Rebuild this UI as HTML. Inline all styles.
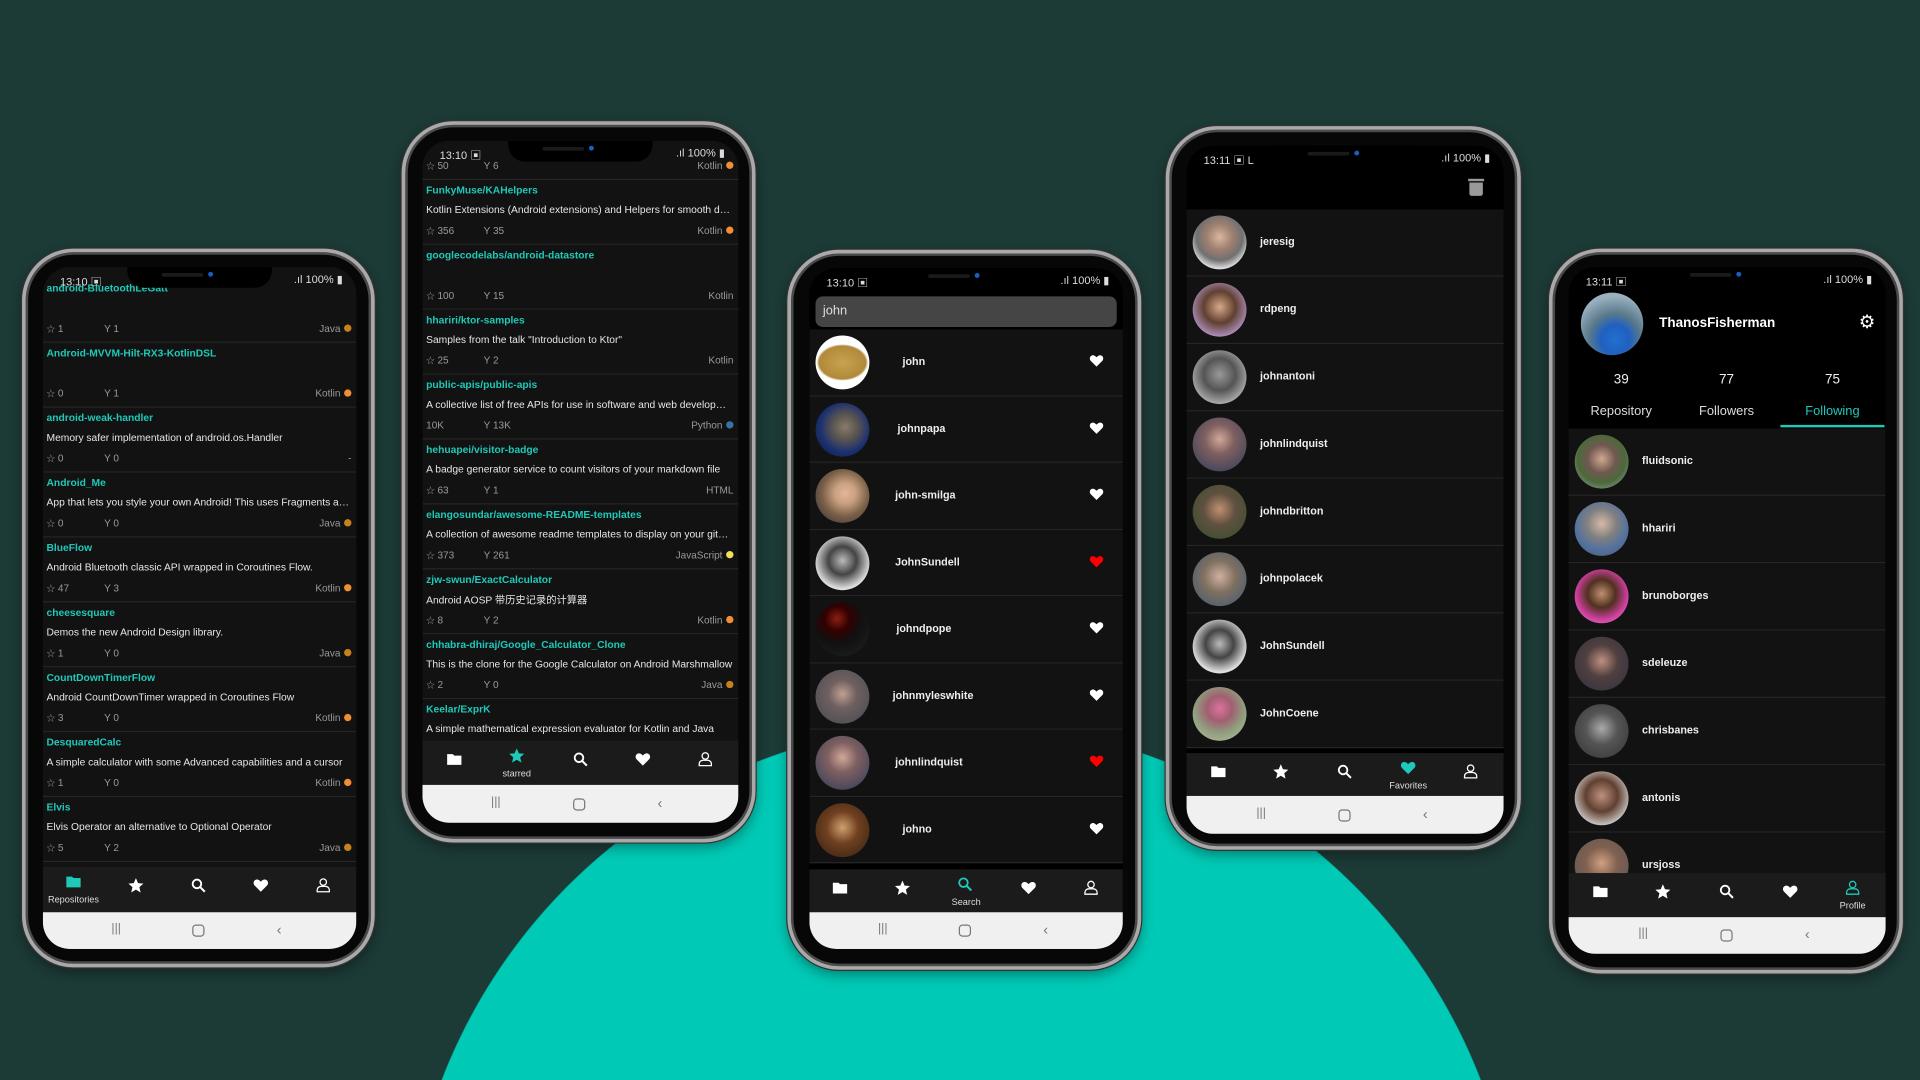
<!DOCTYPE html>
<html><head><meta charset="utf-8"><style>
*{margin:0;padding:0;box-sizing:border-box}
html,body{width:1920px;height:1080px;overflow:hidden;background:#1c3a36}
#w{position:absolute;left:0;top:0;width:1568px;height:882px;transform:scale(1.22449);transform-origin:0 0;font-family:"Liberation Sans","Noto Sans CJK SC",sans-serif;overflow:hidden;background:radial-gradient(circle 455px at 785px 1045px,#00c9b5 99.8%,#1c3a36 100%)}
.phone{position:absolute;border-radius:42px;background:#070707;border:3px solid #a9a9a9;box-shadow:inset 0 0 0 2px #4a4a4a,0 0 0 1px #333,0 4px 10px rgba(0,0,0,.35)}
.scr{position:absolute;border-radius:22px;overflow:hidden;background:#121212}
.notch{position:absolute;left:50%;top:0;width:118px;margin-left:-59px;height:17px;background:#000;border-radius:0 0 14px 14px;z-index:5}
.notch:after{content:"";position:absolute;left:66px;top:4px;width:4px;height:4px;border-radius:50%;background:#1560c0}
.notch:before{content:"";position:absolute;left:28px;top:5px;width:34px;height:3px;border-radius:2px;background:#1a1a1a}
.sb{position:absolute;left:0;right:0;top:0;height:18px;z-index:6;color:#ddd;font-size:9px}
.sb .t{position:absolute;left:14px;top:5px}
.sb .r{position:absolute;right:11px;top:5px}
.list{position:absolute;left:0;right:0}
.it{height:53px;border-bottom:1px solid #262626;position:relative;background:#121212}
.it .ti{position:absolute;left:3px;top:3px;color:#1fc9b9;font-weight:bold;font-size:8.4px;white-space:nowrap}
.it .de{position:absolute;left:3px;right:4px;top:19px;color:#e6e6e6;font-size:8.4px;white-space:nowrap;overflow:hidden;text-overflow:ellipsis}
.it .st{position:absolute;left:3px;top:37px;color:#9a9a9a;font-size:8.2px}
.it .st b{font-weight:normal;font-size:7px}
.it .fk{position:absolute;left:50px;top:37px;color:#9a9a9a;font-size:8.2px}
.it .ln{position:absolute;right:4px;top:37px;color:#9a9a9a;font-size:8.2px}
.dot{display:inline-block;width:6px;height:6px;border-radius:50%;margin-left:3px;vertical-align:0}
.nav{position:absolute;left:0;right:0;height:36px;background:#1b1b1b}
.nav .i{position:absolute;top:8px;width:14px;height:14px;margin-left:-7px}
.nav .sel{top:5px}
.nav .lb{position:absolute;top:22px;font-size:7.5px;color:#ddd;transform:translateX(-50%);white-space:nowrap}
.an{position:absolute;left:0;right:0;bottom:0;background:#f0f0f0}
.an span{position:absolute;top:50%;color:#777}
.u{height:54.5px;border-bottom:1px solid #262626;position:relative;background:#121212}
.av{position:absolute;width:44px;height:44px;border-radius:50%;top:5px}
.nm{position:absolute;top:21px;color:#eee;font-weight:bold;font-size:8.8px}
.ht{position:absolute;top:19px;width:13px;height:13px}
</style></head><body><div id="w">
<svg width="0" height="0" style="position:absolute">
<defs>
<symbol id="fold" viewBox="0 0 24 24"><path d="M2 5h8l2 2h10v13H2z" fill="currentColor"/></symbol>
<symbol id="star" viewBox="0 0 24 24"><path d="M12 2l3 7 7.5.6-5.7 5 1.8 7.4L12 18l-6.6 4 1.8-7.4-5.7-5L9 9z" fill="currentColor"/></symbol>
<symbol id="srch" viewBox="0 0 24 24"><circle cx="10" cy="10" r="6" fill="none" stroke="currentColor" stroke-width="2.6"/><path d="M14.5 14.5L21 21" stroke="currentColor" stroke-width="2.8"/></symbol>
<symbol id="hrt" viewBox="0 0 24 24"><path d="M12 21L3.5 12.5C1 10 1.3 5.5 5 4.2c2.6-.9 5 .5 7 2.8 2-2.3 4.4-3.7 7-2.8 3.7 1.3 4 5.8 1.5 8.3z" fill="currentColor"/></symbol>
<symbol id="usr" viewBox="0 0 24 24"><circle cx="12" cy="7.5" r="4.5" fill="none" stroke="currentColor" stroke-width="1.8"/><path d="M3.5 21v-2.5c0-3 2.5-5 5.5-5h6c3 0 5.5 2 5.5 5V21z" fill="none" stroke="currentColor" stroke-width="1.8"/></symbol>
</defs></svg>

<!-- PHONE 1 -->
<div class="phone" style="left:18px;top:203px;width:288px;height:587px"></div>
<div class="scr" style="left:35px;top:218px;width:256px;height:557px">
<div class="notch"></div><div class="sb"><span class="t">13:10 ▣</span><span class="r">.ıl 100% ▮</span></div>
<div class="list" style="top:9px">
<div class="it"><div class="ti">android-BluetoothLeGatt</div><div class="st"><b>☆</b> 1</div><div class="fk">Y 1</div><div class="ln">Java<span class="dot" style="background:#c9821a"></span></div></div>
<div class="it"><div class="ti">Android-MVVM-Hilt-RX3-KotlinDSL</div><div class="st"><b>☆</b> 0</div><div class="fk">Y 1</div><div class="ln">Kotlin<span class="dot" style="background:#f18e33"></span></div></div>
<div class="it"><div class="ti">android-weak-handler</div><div class="de">Memory safer implementation of android.os.Handler</div><div class="st"><b>☆</b> 0</div><div class="fk">Y 0</div><div class="ln">-</div></div>
<div class="it"><div class="ti">Android_Me</div><div class="de">App that lets you style your own Android! This uses Fragments and more things</div><div class="st"><b>☆</b> 0</div><div class="fk">Y 0</div><div class="ln">Java<span class="dot" style="background:#c9821a"></span></div></div>
<div class="it"><div class="ti">BlueFlow</div><div class="de">Android Bluetooth classic API wrapped in Coroutines Flow.</div><div class="st"><b>☆</b> 47</div><div class="fk">Y 3</div><div class="ln">Kotlin<span class="dot" style="background:#f18e33"></span></div></div>
<div class="it"><div class="ti">cheesesquare</div><div class="de">Demos the new Android Design library.</div><div class="st"><b>☆</b> 1</div><div class="fk">Y 0</div><div class="ln">Java<span class="dot" style="background:#c9821a"></span></div></div>
<div class="it"><div class="ti">CountDownTimerFlow</div><div class="de">Android CountDownTimer wrapped in Coroutines Flow</div><div class="st"><b>☆</b> 3</div><div class="fk">Y 0</div><div class="ln">Kotlin<span class="dot" style="background:#f18e33"></span></div></div>
<div class="it"><div class="ti">DesquaredCalc</div><div class="de">A simple calculator with some Advanced capabilities and a cursor</div><div class="st"><b>☆</b> 1</div><div class="fk">Y 0</div><div class="ln">Kotlin<span class="dot" style="background:#f18e33"></span></div></div>
<div class="it"><div class="ti">Elvis</div><div class="de">Elvis Operator an alternative to Optional Operator</div><div class="st"><b>☆</b> 5</div><div class="fk">Y 2</div><div class="ln">Java<span class="dot" style="background:#c9821a"></span></div></div>
</div>
<div class="nav" style="top:490px;height:37px">
<svg class="i sel" style="left:25px;color:#1fc9b9"><use href="#fold"/></svg><span class="lb" style="left:25px;color:#ddd">Repositories</span>
<svg class="i" style="left:76px;color:#fff"><use href="#star"/></svg>
<svg class="i" style="left:127px;color:#fff"><use href="#srch"/></svg>
<svg class="i" style="left:178px;color:#fff"><use href="#hrt"/></svg>
<svg class="i" style="left:229px;color:#fff"><use href="#usr"/></svg>
</div>
<div class="an" style="height:30px"><span style="left:56px;margin-top:-7px;font-size:10px">|||</span><span style="left:122px;margin-top:-5px;width:10px;height:10px;border:1.5px solid #777;border-radius:3px"></span><span style="left:191px;margin-top:-8px;font-size:12px">‹</span></div>
</div>

<!-- PHONE 2 -->
<div class="phone" style="left:328px;top:99px;width:289px;height:589px"></div>
<div class="scr" style="left:345px;top:115px;width:258px;height:557px">
<div class="list" style="top:-21px">
<div class="it"><div class="ti">x</div><div class="st"><b>☆</b> 50</div><div class="fk">Y 6</div><div class="ln">Kotlin<span class="dot" style="background:#f18e33"></span></div></div>
<div class="it"><div class="ti">FunkyMuse/KAHelpers</div><div class="de">Kotlin Extensions (Android extensions) and Helpers for smooth development</div><div class="st"><b>☆</b> 356</div><div class="fk">Y 35</div><div class="ln">Kotlin<span class="dot" style="background:#f18e33"></span></div></div>
<div class="it"><div class="ti">googlecodelabs/android-datastore</div><div class="st"><b>☆</b> 100</div><div class="fk">Y 15</div><div class="ln">Kotlin</div></div>
<div class="it"><div class="ti">hhariri/ktor-samples</div><div class="de">Samples from the talk "Introduction to Ktor"</div><div class="st"><b>☆</b> 25</div><div class="fk">Y 2</div><div class="ln">Kotlin</div></div>
<div class="it"><div class="ti">public-apis/public-apis</div><div class="de">A collective list of free APIs for use in software and web development</div><div class="st">10K</div><div class="fk">Y 13K</div><div class="ln">Python<span class="dot" style="background:#3572a5"></span></div></div>
<div class="it"><div class="ti">hehuapei/visitor-badge</div><div class="de">A badge generator service to count visitors of your markdown file</div><div class="st"><b>☆</b> 63</div><div class="fk">Y 1</div><div class="ln">HTML</div></div>
<div class="it"><div class="ti">elangosundar/awesome-README-templates</div><div class="de">A collection of awesome readme templates to display on your github profile</div><div class="st"><b>☆</b> 373</div><div class="fk">Y 261</div><div class="ln">JavaScript<span class="dot" style="background:#f1e05a"></span></div></div>
<div class="it"><div class="ti">zjw-swun/ExactCalculator</div><div class="de">Android AOSP 带历史记录的计算器</div><div class="st"><b>☆</b> 8</div><div class="fk">Y 2</div><div class="ln">Kotlin<span class="dot" style="background:#f18e33"></span></div></div>
<div class="it"><div class="ti">chhabra-dhiraj/Google_Calculator_Clone</div><div class="de">This is the clone for the Google Calculator on Android Marshmallow</div><div class="st"><b>☆</b> 2</div><div class="fk">Y 0</div><div class="ln">Java<span class="dot" style="background:#c9821a"></span></div></div>
<div class="it"><div class="ti">Keelar/ExprK</div><div class="de">A simple mathematical expression evaluator for Kotlin and Java</div></div>
</div>
<div class="notch"></div><div class="sb"><span class="t">13:10 ▣</span><span class="r">.ıl 100% ▮</span></div>
<div class="nav" style="top:490px;height:36px">
<svg class="i" style="left:26px;color:#fff"><use href="#fold"/></svg>
<svg class="i sel" style="left:77px;color:#1fc9b9"><use href="#star"/></svg><span class="lb" style="left:77px">starred</span>
<svg class="i" style="left:129px;color:#fff"><use href="#srch"/></svg>
<svg class="i" style="left:180px;color:#fff"><use href="#hrt"/></svg>
<svg class="i" style="left:231px;color:#fff"><use href="#usr"/></svg>
</div>
<div class="an" style="height:31px"><span style="left:56px;margin-top:-7px;font-size:10px">|||</span><span style="left:123px;margin-top:-5px;width:10px;height:10px;border:1.5px solid #777;border-radius:3px"></span><span style="left:192px;margin-top:-8px;font-size:12px">‹</span></div>
</div>

<!-- PHONE 3 -->
<div class="phone" style="left:643px;top:204px;width:289px;height:588px"></div>
<div class="scr" style="left:661px;top:219px;width:256px;height:556px;background:#000">
<div class="notch"></div><div class="sb"><span class="t">13:10 ▣</span><span class="r">.ıl 100% ▮</span></div>
<div style="position:absolute;left:5px;top:23px;width:246px;height:25px;background:#454545;border-radius:6px;color:#ddd;font-size:10.5px;padding:6px 6px">john</div>
<div class="list" style="top:50px">
<div class="u"><div class="av" style="left:5px;background:radial-gradient(ellipse 48% 34% at 50% 50%,#c9a250 0,#b08a3a 90%,#fff 100%)"></div><div class="nm" style="left:76px">john</div><svg class="ht" style="left:228px;color:#fff"><use href="#hrt"/></svg></div>
<div class="u"><div class="av" style="left:5px;background:radial-gradient(circle at 55% 45%,#8a7a6a 0,#5a5550 30%,#1a3070 60%,#101830)"></div><div class="nm" style="left:72px">johnpapa</div><svg class="ht" style="left:228px;color:#fff"><use href="#hrt"/></svg></div>
<div class="u"><div class="av" style="left:5px;background:radial-gradient(circle at 55% 45%,#e2b79a 0,#c9a080 25%,#7a6048 55%,#2a2a3a)"></div><div class="nm" style="left:70px">john-smilga</div><svg class="ht" style="left:228px;color:#fff"><use href="#hrt"/></svg></div>
<div class="u"><div class="av" style="left:5px;background:radial-gradient(circle at 50% 45%,#bbb 0,#444 35%,#ddd 70%,#fff)"></div><div class="nm" style="left:70px">JohnSundell</div><svg class="ht" style="left:228px;color:#f00"><use href="#hrt"/></svg></div>
<div class="u"><div class="av" style="left:5px;background:radial-gradient(circle at 40% 30%,#8a2010 0,#300 25%,#111 50%,#222)"></div><div class="nm" style="left:71px">johndpope</div><svg class="ht" style="left:228px;color:#fff"><use href="#hrt"/></svg></div>
<div class="u"><div class="av" style="left:5px;background:radial-gradient(circle at 50% 45%,#c0a090 0,#706060 35%,#404850)"></div><div class="nm" style="left:68px">johnmyleswhite</div><svg class="ht" style="left:228px;color:#fff"><use href="#hrt"/></svg></div>
<div class="u"><div class="av" style="left:5px;background:radial-gradient(circle at 50% 40%,#d0a898 0,#806060 35%,#2a3a5a)"></div><div class="nm" style="left:70px">johnlindquist</div><svg class="ht" style="left:228px;color:#f00"><use href="#hrt"/></svg></div>
<div class="u"><div class="av" style="left:5px;background:radial-gradient(circle at 50% 45%,#d0a070 0,#704020 40%,#302010)"></div><div class="nm" style="left:76px">johno</div><svg class="ht" style="left:228px;color:#fff"><use href="#hrt"/></svg></div>
</div>
<div class="nav" style="top:491px;height:35px">
<svg class="i" style="left:25px;color:#fff"><use href="#fold"/></svg>
<svg class="i" style="left:76px;color:#fff"><use href="#star"/></svg>
<svg class="i sel" style="left:127px;color:#1fc9b9"><use href="#srch"/></svg><span class="lb" style="left:128px">Search</span>
<svg class="i" style="left:179px;color:#fff"><use href="#hrt"/></svg>
<svg class="i" style="left:230px;color:#fff"><use href="#usr"/></svg>
</div>
<div class="an" style="height:30px"><span style="left:56px;margin-top:-7px;font-size:10px">|||</span><span style="left:122px;margin-top:-5px;width:10px;height:10px;border:1.5px solid #777;border-radius:3px"></span><span style="left:191px;margin-top:-8px;font-size:12px">‹</span></div>
</div>

<!-- PHONE 4 -->
<div class="phone" style="left:952px;top:103px;width:290px;height:591px"></div>
<div class="scr" style="left:969px;top:119px;width:259px;height:562px;background:#000">
<div class="notch"></div><div class="sb"><span class="t">13:11 ▣ L</span><span class="r">.ıl 100% ▮</span></div>
<div style="position:absolute;left:231px;top:27px;width:11px;height:14px"><div style="height:2px;background:#999;margin:0 -1px"></div><div style="height:11px;margin-top:1px;background:#999;border-radius:0 0 2px 2px"></div></div>
<div class="list" style="top:52px">
<div class="u" style="height:55px"><div class="av" style="left:5px;background:radial-gradient(circle at 50% 40%,#d8b8a0 0,#a08070 30%,#707070 55%,#ddd 75%)"></div><div class="nm" style="left:60px">jeresig</div></div>
<div class="u" style="height:55px"><div class="av" style="left:5px;background:radial-gradient(circle at 50% 45%,#d8a888 0,#604030 40%,#b090c0 75%)"></div><div class="nm" style="left:60px">rdpeng</div></div>
<div class="u" style="height:55px"><div class="av" style="left:5px;background:radial-gradient(circle at 50% 45%,#999 0,#555 40%,#bbb 80%)"></div><div class="nm" style="left:60px">johnantoni</div></div>
<div class="u" style="height:55px"><div class="av" style="left:5px;background:radial-gradient(circle at 50% 40%,#d0a898 0,#806060 35%,#2a3a5a)"></div><div class="nm" style="left:60px">johnlindquist</div></div>
<div class="u" style="height:55px"><div class="av" style="left:5px;background:radial-gradient(circle at 50% 45%,#c09070 0,#605040 40%,#405030 80%)"></div><div class="nm" style="left:60px">johndbritton</div></div>
<div class="u" style="height:55px"><div class="av" style="left:5px;background:radial-gradient(circle at 50% 45%,#d0b0a0 0,#807060 40%,#506070 80%)"></div><div class="nm" style="left:60px">johnpolacek</div></div>
<div class="u" style="height:55px"><div class="av" style="left:5px;background:radial-gradient(circle at 50% 45%,#bbb 0,#444 35%,#ddd 70%,#fff)"></div><div class="nm" style="left:60px">JohnSundell</div></div>
<div class="u" style="height:55px"><div class="av" style="left:5px;background:radial-gradient(circle at 50% 40%,#e070a0 0,#a06070 30%,#90a080 60%,#c0c0a0)"></div><div class="nm" style="left:60px">JohnCoene</div></div>
</div>
<div class="nav" style="top:496px;height:35px">
<svg class="i" style="left:26px;color:#fff"><use href="#fold"/></svg>
<svg class="i" style="left:77px;color:#fff"><use href="#star"/></svg>
<svg class="i" style="left:129px;color:#fff"><use href="#srch"/></svg>
<svg class="i sel" style="left:181px;color:#1fc9b9"><use href="#hrt"/></svg><span class="lb" style="left:181px">Favorites</span>
<svg class="i" style="left:232px;color:#fff"><use href="#usr"/></svg>
</div>
<div class="an" style="height:31px"><span style="left:57px;margin-top:-7px;font-size:10px">|||</span><span style="left:124px;margin-top:-5px;width:10px;height:10px;border:1.5px solid #777;border-radius:3px"></span><span style="left:193px;margin-top:-8px;font-size:12px">‹</span></div>
</div>

<!-- PHONE 5 -->
<div class="phone" style="left:1265px;top:203px;width:289px;height:592px"></div>
<div class="scr" style="left:1281px;top:218px;width:259px;height:561px;background:#000">
<div class="notch"></div><div class="sb"><span class="t">13:11 ▣</span><span class="r">.ıl 100% ▮</span></div>
<div style="position:absolute;left:10px;top:21px;width:51px;height:51px;border-radius:50%;background:radial-gradient(circle at 55% 75%,#2070d0 0,#2060c0 25%,#5a7a8a 45%,#9ab0c0 75%)"></div>
<div style="position:absolute;left:74px;top:40px;color:#fff;font-weight:bold;font-size:11px">ThanosFisherman</div>
<div style="position:absolute;left:237px;top:38px;color:#fff;font-size:15px;line-height:15px">⚙</div>
<div style="position:absolute;left:0;width:86px;top:86px;text-align:center;color:#eee;font-size:11px">39</div>
<div style="position:absolute;left:86px;width:86px;top:86px;text-align:center;color:#eee;font-size:11px">77</div>
<div style="position:absolute;left:172px;width:87px;top:86px;text-align:center;color:#eee;font-size:11px">75</div>
<div style="position:absolute;left:0;width:86px;top:112px;text-align:center;color:#ddd;font-size:10.5px">Repository</div>
<div style="position:absolute;left:86px;width:86px;top:112px;text-align:center;color:#ddd;font-size:10.5px">Followers</div>
<div style="position:absolute;left:172px;width:87px;top:112px;text-align:center;color:#1fc9b9;font-size:10.5px">Following</div>
<div style="position:absolute;left:173px;width:85px;top:129px;height:2px;background:#1fc9b9"></div>
<div class="list" style="top:132px">
<div class="u" style="height:55px"><div class="av" style="left:5px;background:radial-gradient(circle at 50% 45%,#d0a890 0,#705850 35%,#4a6a3a 60%,#aab)"></div><div class="nm" style="left:60px">fluidsonic</div></div>
<div class="u" style="height:55px"><div class="av" style="left:5px;background:radial-gradient(circle at 50% 40%,#d8b8a8 0,#808080 35%,#5070a0 65%,#555)"></div><div class="nm" style="left:60px">hhariri</div></div>
<div class="u" style="height:55px"><div class="av" style="left:5px;background:radial-gradient(circle at 50% 45%,#c09070 0,#503020 35%,#d040a0 65%,#e0a0c0)"></div><div class="nm" style="left:60px">brunoborges</div></div>
<div class="u" style="height:55px"><div class="av" style="left:5px;background:radial-gradient(circle at 50% 45%,#c09080 0,#504040 40%,#303040)"></div><div class="nm" style="left:60px">sdeleuze</div></div>
<div class="u" style="height:55px"><div class="av" style="left:5px;background:radial-gradient(circle at 50% 45%,#aaa 0,#555 40%,#333)"></div><div class="nm" style="left:60px">chrisbanes</div></div>
<div class="u" style="height:55px"><div class="av" style="left:5px;background:radial-gradient(circle at 50% 45%,#c09080 0,#604030 40%,#ddd 80%)"></div><div class="nm" style="left:60px">antonis</div></div>
<div class="u" style="height:55px"><div class="av" style="left:5px;background:radial-gradient(circle at 50% 45%,#d0a080 0,#806050 40%,#555)"></div><div class="nm" style="left:60px">ursjoss</div></div>
</div>
<div class="nav" style="top:495px;height:36px">
<svg class="i" style="left:26px;color:#fff"><use href="#fold"/></svg>
<svg class="i" style="left:77px;color:#fff"><use href="#star"/></svg>
<svg class="i" style="left:129px;color:#fff"><use href="#srch"/></svg>
<svg class="i" style="left:181px;color:#fff"><use href="#hrt"/></svg>
<svg class="i sel" style="left:232px;color:#1fc9b9"><use href="#usr"/></svg><span class="lb" style="left:232px">Profile</span>
</div>
<div class="an" style="height:30px"><span style="left:57px;margin-top:-7px;font-size:10px">|||</span><span style="left:124px;margin-top:-5px;width:10px;height:10px;border:1.5px solid #777;border-radius:3px"></span><span style="left:193px;margin-top:-8px;font-size:12px">‹</span></div>
</div>

</div></body></html>
